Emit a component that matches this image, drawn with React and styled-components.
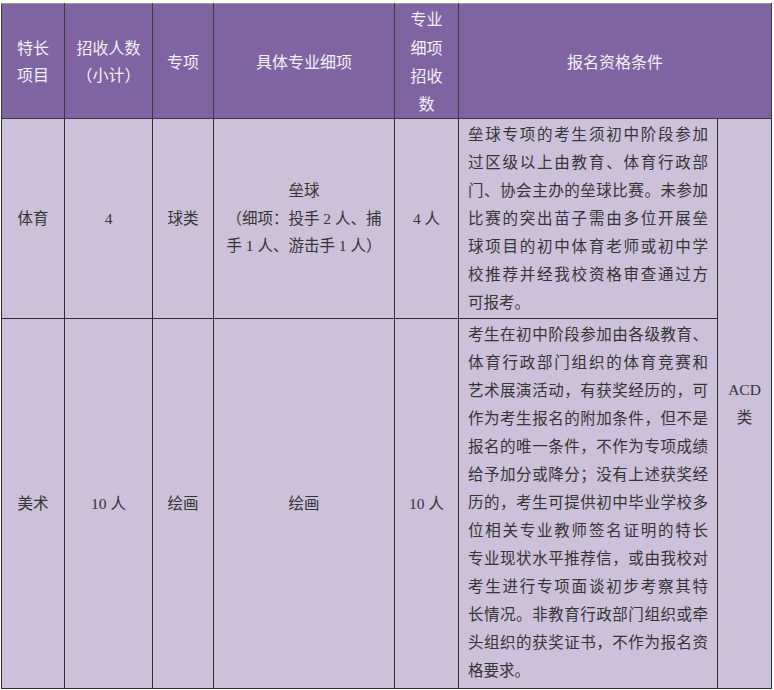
import React from "react";
import styled, { createGlobalStyle } from "styled-components";

const GlobalStyle = createGlobalStyle`
    html, body {
        margin: 0;
        padding: 0;
        background: #fff;
    }
`;

const Page = styled.div`
    padding: 3px 0 0 1px;
`;

const Table = styled.table`
    width: 770px;
    border-collapse: collapse;
    table-layout: fixed;
    font-family: "Liberation Serif", "Noto Sans CJK SC", serif;
    font-size: 15.5px;
    color: #353535;
`;

const Col = styled.col`
    width: ${(p) => p.$w}px;
`;

const Row = styled.tr`
    height: ${(p) => p.$h}px;
`;

const HeadCell = styled.th`
    background: #8064a2;
    color: #f4f1f8;
    font-family: "Noto Sans CJK SC", sans-serif;
    font-size: 16px;
    font-weight: normal;
    line-height: ${(p) => (p.$tall ? 28.4 : 27)}px;
    text-align: center;
    vertical-align: middle;
    border: 1px solid #3c3c3c;
    border-top-color: #9a9a9a;
    padding: 0;
`;

const Cell = styled.td`
    background: #ccc0da;
    text-align: center;
    vertical-align: middle;
    line-height: 27.5px;
    border: 1px solid #2e2e2e;
    padding: 0;
`;

const ConditionCell = styled(Cell)`
    vertical-align: top;
    text-align: left;
    line-height: 28px;
    padding: 2px 9px 0 9px;
`;

const Line = styled.span`
    display: block;
    white-space: nowrap;
    text-align: ${(p) => (p.$last ? "left" : "justify")};
    text-align-last: ${(p) => (p.$last ? "left" : "justify")};
`;

const columns = [63, 88, 61, 181, 64, 259, 54];

const softballRule = [
    "垒球专项的考生须初中阶段参加",
    "过区级以上由教育、体育行政部",
    "门、协会主办的垒球比赛。未参加",
    "比赛的突出苗子需由多位开展垒",
    "球项目的初中体育老师或初中学",
    "校推荐并经我校资格审查通过方",
    "可报考。",
];

const artRule = [
    "考生在初中阶段参加由各级教育、",
    "体育行政部门组织的体育竞赛和",
    "艺术展演活动，有获奖经历的，可",
    "作为考生报名的附加条件，但不是",
    "报名的唯一条件，不作为专项成绩",
    "给予加分或降分；没有上述获奖经",
    "历的，考生可提供初中毕业学校多",
    "位相关专业教师签名证明的特长",
    "专业现状水平推荐信，或由我校对",
    "考生进行专项面谈初步考察其特",
    "长情况。非教育行政部门组织或牵",
    "头组织的获奖证书，不作为报名资",
    "格要求。",
];

const Lines = ({ lines }) =>
    lines.map((text, index) => (
        <Line key={index} $last={index === lines.length - 1}>
            {text}
        </Line>
    ));

const App = () => {
    return (
        <>
            <GlobalStyle />
            <Page>
                <Table>
                    <colgroup>
                        {columns.map((w, i) => (
                            <Col key={i} $w={w} />
                        ))}
                    </colgroup>
                    <thead>
                        <Row $h={115}>
                            <HeadCell>
                                特长
                                <br />
                                项目
                            </HeadCell>
                            <HeadCell>
                                招收人数
                                <br />
                                （小计）
                            </HeadCell>
                            <HeadCell>专项</HeadCell>
                            <HeadCell>具体专业细项</HeadCell>
                            <HeadCell $tall>
                                专业
                                <br />
                                细项
                                <br />
                                招收
                                <br />
                                数
                            </HeadCell>
                            <HeadCell colSpan={2}>报名资格条件</HeadCell>
                        </Row>
                    </thead>
                    <tbody>
                        <Row $h={200}>
                            <Cell>体育</Cell>
                            <Cell>4</Cell>
                            <Cell>球类</Cell>
                            <Cell>
                                垒球
                                <br />
                                （细项：投手 2 人、捕
                                <br />
                                手 1 人、游击手 1 人）
                            </Cell>
                            <Cell>4 人</Cell>
                            <ConditionCell>
                                <Lines lines={softballRule} />
                            </ConditionCell>
                            <Cell rowSpan={2}>
                                ACD
                                <br />
                                类
                            </Cell>
                        </Row>
                        <Row $h={370}>
                            <Cell>美术</Cell>
                            <Cell>10 人</Cell>
                            <Cell>绘画</Cell>
                            <Cell>绘画</Cell>
                            <Cell>10 人</Cell>
                            <ConditionCell>
                                <Lines lines={artRule} />
                            </ConditionCell>
                        </Row>
                    </tbody>
                </Table>
            </Page>
        </>
    );
};

export default App;
